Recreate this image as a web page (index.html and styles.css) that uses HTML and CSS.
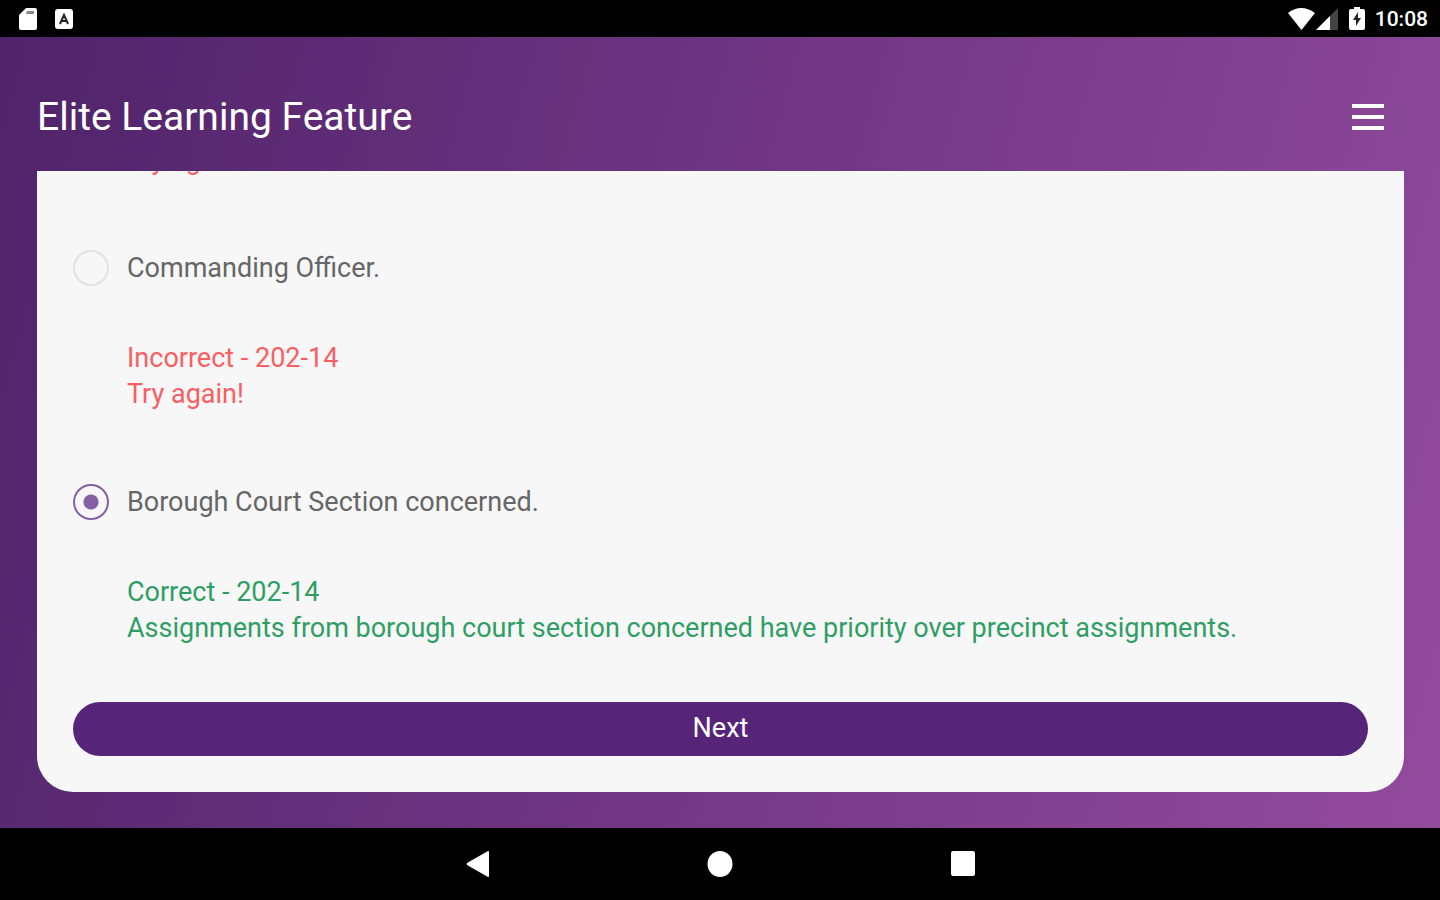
FILE: index.html
```html
<!DOCTYPE html>
<html lang="en">
<head>
  <meta charset="UTF-8">
  <meta name="viewport" content="width=device-width, initial-scale=1">
  <title>Elite Learning Feature</title>
  <link rel="stylesheet" href="styles.css">
</head>
<body>
  <!-- System status bar -->
  <div class="status-bar">
    <div class="status-left">
      <svg width="20" height="24" viewBox="0 0 20 24" aria-hidden="true">
        <path d="M8 1h9q2 0 2 2v18q0 2-2 2H3q-2 0-2-2V8z" fill="#fff"/>
        <path d="M9 4h7v3H8z" fill="#888"/>
      </svg>
      <svg width="18" height="20" viewBox="0 0 18 20" aria-hidden="true">
        <rect x="0" y="0" width="18" height="20" rx="3" fill="#fff"/>
        <path d="M5 15l4-9 4 9M6 12h6" fill="none" stroke="#222" stroke-width="2"/>
      </svg>
    </div>
    <div class="status-right">
      <svg class="wifi" width="27" height="22" viewBox="0 0 27 22" aria-hidden="true">
        <path d="M0 5Q13-5 27 5L13.500 22z" fill="#fff"/>
      </svg>
      <svg class="signal" width="22" height="22" viewBox="0 0 22 22" aria-hidden="true">
        <path d="M22 0v22H0z" fill="#444"/>
        <path d="M14 8v14H0z" fill="#fff"/>
      </svg>
      <svg class="battery" width="16" height="24" viewBox="0 0 16 24" aria-hidden="true">
        <path d="M5 0h6v2h3q2 0 2 2v17q0 2-2 2H2q-2 0-2-2V4q0-2 2-2h3z" fill="#fff"/>
        <path d="M9 5l-5 8h3v6l5-8H9z" fill="#222"/>
      </svg>
      <span class="clock">10:08</span>
    </div>
  </div>

  <main class="app">
    <header class="app-header">
      <h1 class="title">Elite Learning Feature</h1>
      <button class="menu-btn" type="button" aria-label="Menu">
        <span></span><span></span><span></span>
      </button>
    </header>

    <!-- Quiz card, scrolled to the last answers -->
    <form class="card">
      <p class="feedback incorrect">Try again!</p>

      <div class="option">
        <input type="radio" name="answer" id="answer3">
        <label for="answer3">Commanding Officer.</label>
      </div>
      <p class="feedback incorrect">Incorrect - 202-14<br>Try again!</p>

      <div class="option">
        <input type="radio" name="answer" id="answer4" checked>
        <label for="answer4">Borough Court Section concerned.</label>
      </div>
      <p class="feedback correct">Correct - 202-14<br>Assignments from borough court section concerned have priority over precinct assignments.</p>

      <button class="next-btn" type="button">Next</button>
    </form>
  </main>

  <!-- System navigation -->
  <nav class="nav-bar">
    <button type="button" aria-label="Back">
      <svg width="24" height="28" viewBox="0 0 24 28"><path d="M23 1q1 0 1 1v24q0 1-1 1L2 15q-1-1 0-2z" fill="#fff"/></svg>
    </button>
    <button type="button" aria-label="Home">
      <svg width="26" height="28" viewBox="0 0 26 28"><ellipse cx="13" cy="14" rx="12.500" ry="13" fill="#fff"/></svg>
    </button>
    <button type="button" aria-label="Recent apps">
      <svg width="24" height="26" viewBox="0 0 24 26"><rect x="0" y="0" width="24" height="25" rx="2" fill="#fff"/></svg>
    </button>
  </nav>
</body>
</html>
```
FILE: styles.css
```css
* {
  box-sizing: border-box;
}

body {
  margin: 0;
  min-height: 100vh;
  display: flex;
  flex-direction: column;
  font-family: Roboto, sans-serif;
  background: #000;
}

button {
  border: none;
  padding: 0;
  background: none;
  font-family: inherit;
  cursor: pointer;
}

svg {
  display: block;
}

/* Status bar */
.status-bar {
  height: 37px;
  padding: 0 12px 0 18px;
  display: flex;
  justify-content: space-between;
  align-items: center;
  color: #fff;
}

.status-left,
.status-right {
  display: flex;
  align-items: center;
}

.status-left {
  gap: 17px;
}

.signal {
  margin: 0 11px 0 1px;
}

.battery {
  margin-right: 10px;
}

.clock {
  font-size: 21px;
  font-weight: 500;
}

/* App area */
.app {
  flex: 1;
  min-height: 0;
  padding: 0 36px 36px 37px;
  display: flex;
  flex-direction: column;
  background: linear-gradient(105deg, #4f236a 0%, #934b9d 100%);
}

.app-header {
  height: 134px;
  padding: 26px 20px 0 0;
  display: flex;
  justify-content: space-between;
  align-items: center;
}

.title {
  margin: 0;
  font-size: 39px;
  font-weight: 400;
  color: #fff;
}

.menu-btn {
  width: 32px;
  display: flex;
  flex-direction: column;
  gap: 7px;
}

.menu-btn span {
  width: 100%;
  height: 4px;
  background: #fff;
}

/* Quiz card */
.card {
  flex: 1 0 0;
  min-height: 0;
  padding: 0 36px 36px;
  display: flex;
  flex-direction: column;
  justify-content: flex-end;
  overflow: hidden;
  border-radius: 0 0 36px 36px;
  background: #f7f7f7;
  font-size: 27px;
  line-height: 36px;
}

.card > * {
  flex-shrink: 0;
}

.option {
  display: flex;
  align-items: center;
  gap: 18px;
  margin-bottom: 54px;
  color: #666;
}

.option input {
  appearance: none;
  width: 36px;
  height: 36px;
  margin: 0;
  border: 2px solid #e2e2e2;
  border-radius: 50%;
}

.option input:checked {
  border-color: #8460a4;
  background: radial-gradient(circle, #8460a4 7px, transparent 8px);
}

.feedback {
  margin: 0 0 72px 54px;
}

.feedback.incorrect {
  color: #f95f62;
}

.feedback.correct {
  margin-bottom: 56px;
  color: #2f9e64;
}

.next-btn {
  height: 54px;
  padding-bottom: 2px;
  border-radius: 27px;
  background: #562479;
  color: #fff;
  font-size: 27px;
}

/* Navigation bar */
.nav-bar {
  height: 72px;
  display: flex;
  justify-content: center;
  align-items: center;
  gap: 218px;
}
```
